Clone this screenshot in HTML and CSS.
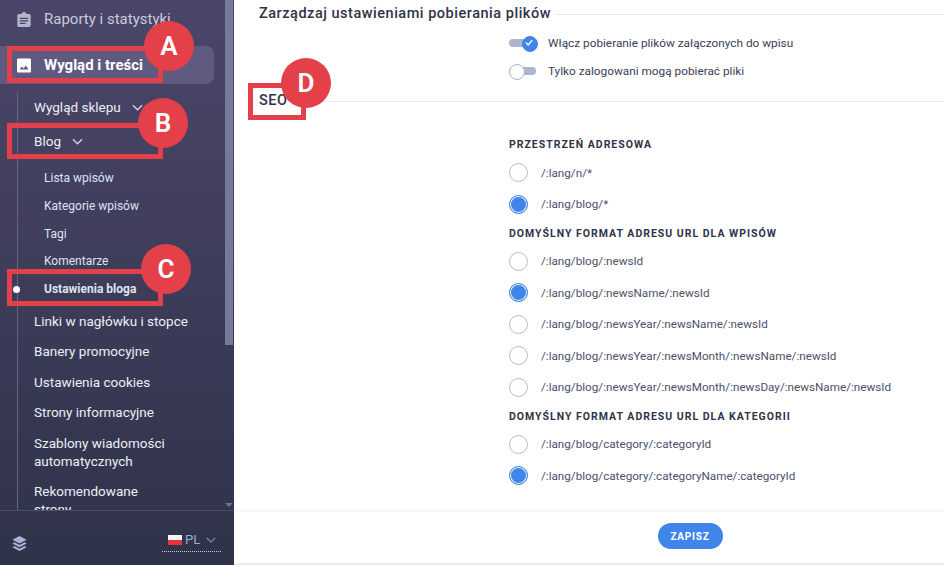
FILE: index.html
```html
<!DOCTYPE html>
<html lang="pl">

<head>
    <meta charset="utf-8">
    <title>Ustawienia bloga</title>
    <link rel="stylesheet" href="styles.css">
</head>

<body>
    <div class="app">
        <aside class="sidebar">
            <nav class="nav">
                <a class="nav-top">
                    <svg class="nav-icon" viewBox="0 0 16 18"><path fill="#b4b7cc" d="M2 2.500h3C5 1.200 6.300 0 8 0s3 1.200 3 2.500h3c1 0 2 .8 2 2V16c0 1.100-1 2-2 2H2c-1 0-2-.9-2-2V4.500c0-1.200 1-2 2-2z"/><path fill="#48456a" d="M3 7h10v1.500H3zM3 10h10v1.500H3zM3 13h7v1.500H3z"/></svg>
                    Raporty i statystyki
                </a>
                <a class="nav-top active">
                    <svg class="nav-icon" viewBox="0 0 16 16"><path fill="#fff" d="M1.500 0h13C15.300 0 16 .7 16 1.500v13c0 .8-.7 1.500-1.500 1.500h-13C.7 16 0 15.300 0 14.500v-13C0 .7.7 0 1.500 0z"/><path fill="#5f5a80" d="M3 12.500l2.600-3.300 1.900 2.200 2.600-3.400 3 4.500z"/></svg>
                    Wygląd i treści
                </a>
                <div class="subnav">
                    <a class="sub tall">Wygląd sklepu <svg class="chev" viewBox="0 0 12 7"><path d="M1 1l5 5 5-5"/></svg></a>
                    <a class="sub blog">Blog <svg class="chev" viewBox="0 0 12 7"><path d="M1 1l5 5 5-5"/></svg></a>
                    <a class="leaf">Lista wpisów</a>
                    <a class="leaf">Kategorie wpisów</a>
                    <a class="leaf">Tagi</a>
                    <a class="leaf">Komentarze</a>
                    <a class="leaf current">Ustawienia bloga</a>
                    <a class="sub links">Linki w nagłówku i stopce</a>
                    <a class="sub">Banery promocyjne</a>
                    <a class="sub">Ustawienia cookies</a>
                    <a class="sub">Strony informacyjne</a>
                    <a class="sub">Szablony wiadomości automatycznych</a>
                    <a class="sub">Rekomendowane<br>strony</a>
                </div>
            </nav>
            <div class="scrollbar"></div>
            <div class="scroll-arrow"></div>
            <div class="side-foot">
                <svg class="layers" viewBox="0 0 16 16"><path fill="#a9b4d6" d="M8 0l7.500 4L8 8 .5 4z"/><path fill="#a9b4d6" d="M2.500 6.700L.5 8 8 12l7.500-4-2-1.300L8 9.700z"/><path fill="#a9b4d6" d="M2.500 10.700L.5 12 8 16l7.500-4-2-1.300L8 13.700z"/></svg>
                <div class="lang">
                    <span class="flag"></span>
                    <span>PL</span>
                    <svg class="chev small" viewBox="0 0 12 7"><path d="M1 1l5 5 5-5"/></svg>
                </div>
            </div>
        </aside>

        <main class="main">
            <div class="content">
                <div class="section-title first"><h2>Zarządzaj ustawieniami pobierania plików</h2></div>
                <div class="fields toggles">
                    <div class="toggle-row">
                        <span class="toggle on"><svg viewBox="0 0 10 8"><path d="M1 4l3 3 5-6"/></svg></span>
                        Włącz pobieranie plików załączonych do wpisu
                    </div>
                    <div class="toggle-row">
                        <span class="toggle"></span>
                        Tylko zalogowani mogą pobierać pliki
                    </div>
                </div>
                <div class="section-title seo"><h2>SEO</h2></div>
                <div class="fields">
                    <h3>Przestrzeń adresowa</h3>
                    <div class="radio-row"><span class="radio"></span>/:lang/n/*</div>
                    <div class="radio-row"><span class="radio on"></span>/:lang/blog/*</div>
                    <h3>Domyślny format adresu URL dla wpisów</h3>
                    <div class="radio-row"><span class="radio"></span>/:lang/blog/:newsId</div>
                    <div class="radio-row"><span class="radio on"></span>/:lang/blog/:newsName/:newsId</div>
                    <div class="radio-row"><span class="radio"></span>/:lang/blog/:newsYear/:newsName/:newsId</div>
                    <div class="radio-row"><span class="radio"></span>/:lang/blog/:newsYear/:newsMonth/:newsName/:newsId</div>
                    <div class="radio-row"><span class="radio"></span>/:lang/blog/:newsYear/:newsMonth/:newsDay/:newsName/:newsId</div>
                    <h3>Domyślny format adresu URL dla kategorii</h3>
                    <div class="radio-row"><span class="radio"></span>/:lang/blog/category/:categoryId</div>
                    <div class="radio-row"><span class="radio on"></span>/:lang/blog/category/:categoryName/:categoryId</div>
                </div>
            </div>
            <div class="save-bar"><button class="save">Zapisz</button></div>
        </main>
    </div>

    <!-- czerwone oznaczenia na zrzucie -->
    <div class="mark box-a"></div>
    <div class="mark box-b"></div>
    <div class="mark box-c"></div>
    <div class="mark box-d"></div>
    <div class="pin pin-a">A</div>
    <div class="pin pin-b">B</div>
    <div class="pin pin-c">C</div>
    <div class="pin pin-d">D</div>
</body>

</html>
```

FILE: styles.css
```css
* {
    box-sizing: border-box;
}

body {
    margin: 0;
    font-family: Roboto, "Noto Sans", sans-serif;
    color: #2f3349;
    background: #fff;
    overflow: hidden;
}

.app {
    display: flex;
    width: 944px;
    height: 565px;
}

/* sidebar */

.sidebar {
    position: relative;
    flex: 0 0 234px;
    display: flex;
    flex-direction: column;
    background: linear-gradient(180deg, #4b4669 0%, #2f3349 100%);
}

.nav {
    height: 511px;
    overflow: hidden;
    border-bottom: 1px solid #4a4f68;
}

.nav-top {
    display: flex;
    align-items: center;
    gap: 13px;
    width: 214px;
    height: 38px;
    padding-left: 17px;
    border-radius: 0 8px 8px 0;
    font-size: 15px;
    color: #c9cbdd;
}

.nav-top:first-child {
    margin-bottom: 8px;
}

.nav-icon {
    width: 14px;
    height: 15px;
    flex: none;
}

.nav-top.active {
    background: #5f5a80;
    color: #fff;
    font-weight: 700;
}

.subnav {
    margin: 8px 0 0 17px;
    padding: 0 0 0 16px;
    border-left: 1px solid #62648a;
    display: flex;
    flex-direction: column;
    font-size: 13.500px;
    color: #eceef6;
}

.sub {
    display: block;
    padding: 6px 0 6px;
    line-height: 18px;
    width: 170px;
    margin-bottom: 0.500px;
}

.sub.tall {
    margin-bottom: 4px;
}

.sub.blog {
    margin-bottom: 8px;
}

.sub.links {
    margin-top: 3px;
}

.chev {
    width: 11px;
    height: 7px;
    margin-left: 8px;
    vertical-align: 1px;
    fill: none;
    stroke: #d5d8e8;
    stroke-width: 1.300;
}

.chev.small {
    width: 10px;
    height: 6px;
    margin-left: 3px;
    stroke: #8f97b8;
}

.leaf {
    position: relative;
    display: block;
    height: 27.800px;
    line-height: 28px;
    padding-left: 10px;
    font-size: 12px;
    color: #dfe3f2;
}

.leaf.current {
    font-weight: 700;
}

.leaf.current::before {
    content: "";
    position: absolute;
    left: -21px;
    top: 11px;
    width: 7px;
    height: 7px;
    border-radius: 50%;
    background: #fff;
}

.scrollbar {
    position: absolute;
    left: 225px;
    top: 0;
    width: 8px;
    height: 345px;
    background: #77799b;
}

.scroll-arrow {
    position: absolute;
    left: 225px;
    top: 503px;
    border: 4px solid transparent;
    border-top: 4px solid #6e7390;
}

.side-foot {
    flex: 1;
    display: flex;
    align-items: center;
    justify-content: space-between;
    padding: 10px 13px 0 12px;
}

.layers {
    width: 15px;
    height: 15px;
}

.lang {
    display: flex;
    align-items: center;
    gap: 3px;
    width: 59px;
    height: 24px;
    margin-bottom: 6px;
    padding-left: 6px;
    border-bottom: 1px dotted #c6cbe0;
    font-size: 13px;
    color: #a3abca;
}

.flag {
    width: 14px;
    height: 10px;
    background: linear-gradient(180deg, #f4f4f4 50%, #e8323c 50%);
}

/* main */

.main {
    flex: 1;
    display: flex;
    flex-direction: column;
}

.content {
    height: 512px;
    overflow: hidden;
    padding-left: 25px;
}

.section-title {
    display: flex;
    align-items: center;
    gap: 4px;
}

.section-title::after {
    content: "";
    flex: 1;
    height: 1px;
    background: #e8e9ee;
}

.section-title h2 {
    margin: 0;
    font-size: 14.500px;
    font-weight: 500;
    letter-spacing: 0.520px;
    line-height: 18px;
}

.section-title.first {
    margin-top: 5px;
}

.section-title.seo {
    margin-top: 7px;
}

.fields {
    margin-left: 250px;
}

.toggles {
    margin-top: 6px;
}

.toggle-row {
    display: flex;
    align-items: center;
    gap: 12px;
    height: 28px;
    font-size: 11.800px;
    color: #3a3e56;
}

.toggle {
    position: relative;
    flex: none;
    width: 27px;
    height: 8px;
    border-radius: 4px;
    background: #acb4cf;
}

.toggle::before {
    content: "";
    position: absolute;
    left: 0;
    top: -3px;
    width: 14px;
    height: 14px;
    border-radius: 50%;
    border: 1px solid #acb4cf;
    background: #fff;
}

.toggle.on::before {
    left: 13px;
    background: #3f85ea;
    border-color: #3f85ea;
}

.toggle svg {
    position: absolute;
    left: 16px;
    top: 0;
    z-index: 1;
    width: 8px;
    height: 7px;
    fill: none;
    stroke: #fff;
    stroke-width: 1.800;
}

h3 {
    margin: 0;
    height: 17px;
    line-height: 17px;
    font-size: 10.500px;
    font-weight: 700;
    letter-spacing: 1px;
    text-transform: uppercase;
}

.fields h3:first-child {
    margin-top: 26px;
    margin-bottom: 4px;
}

.radio-row + h3 {
    margin-top: 5px;
    margin-bottom: 4px;
}

.radio-row {
    display: flex;
    align-items: center;
    gap: 13px;
    height: 31.400px;
    font-size: 11.700px;
    color: #4c5069;
}

.radio {
    flex: none;
    width: 19px;
    height: 19px;
    border-radius: 50%;
    border: 1px solid #b5bbd3;
    background: #fff;
}

.radio.on {
    border-color: #3f85ea;
    background: #3f85ea;
    box-shadow: inset 0 0 0 1px #fff;
}

.save-bar {
    flex: 1;
    display: flex;
    justify-content: center;
    align-items: center;
    padding: 0 0 3px 202px;
    border-bottom: 2px solid #eceded;
    box-shadow: 0 -2px 4px rgba(40, 44, 70, 0.060);
    position: relative;
}

.save {
    width: 65px;
    height: 26px;
    border: 0;
    border-radius: 13px;
    background: #3f85ea;
    color: #fff;
    font-family: inherit;
    font-size: 10px;
    font-weight: 700;
    letter-spacing: 0.800px;
    text-transform: uppercase;
}

/* oznaczenia */

.mark {
    position: absolute;
    border: 5px solid #e4404a;
}

.box-a { left: 7px; top: 46px; width: 156px; height: 37px; }
.box-b { left: 7px; top: 123px; width: 156px; height: 36px; }
.box-c { left: 7px; top: 269px; width: 156px; height: 37px; }
.box-d { left: 248px; top: 83px; width: 58px; height: 37px; }

.pin {
    position: absolute;
    width: 50px;
    height: 50px;
    border-radius: 50%;
    background: #e4404a;
    color: #fff;
    font-size: 26px;
    font-weight: 600;
    line-height: 50px;
    text-align: center;
}

.pin-a { left: 144px; top: 21px; }
.pin-b { left: 138px; top: 98px; }
.pin-c { left: 141px; top: 244px; }
.pin-d { left: 281px; top: 58px; }
```
